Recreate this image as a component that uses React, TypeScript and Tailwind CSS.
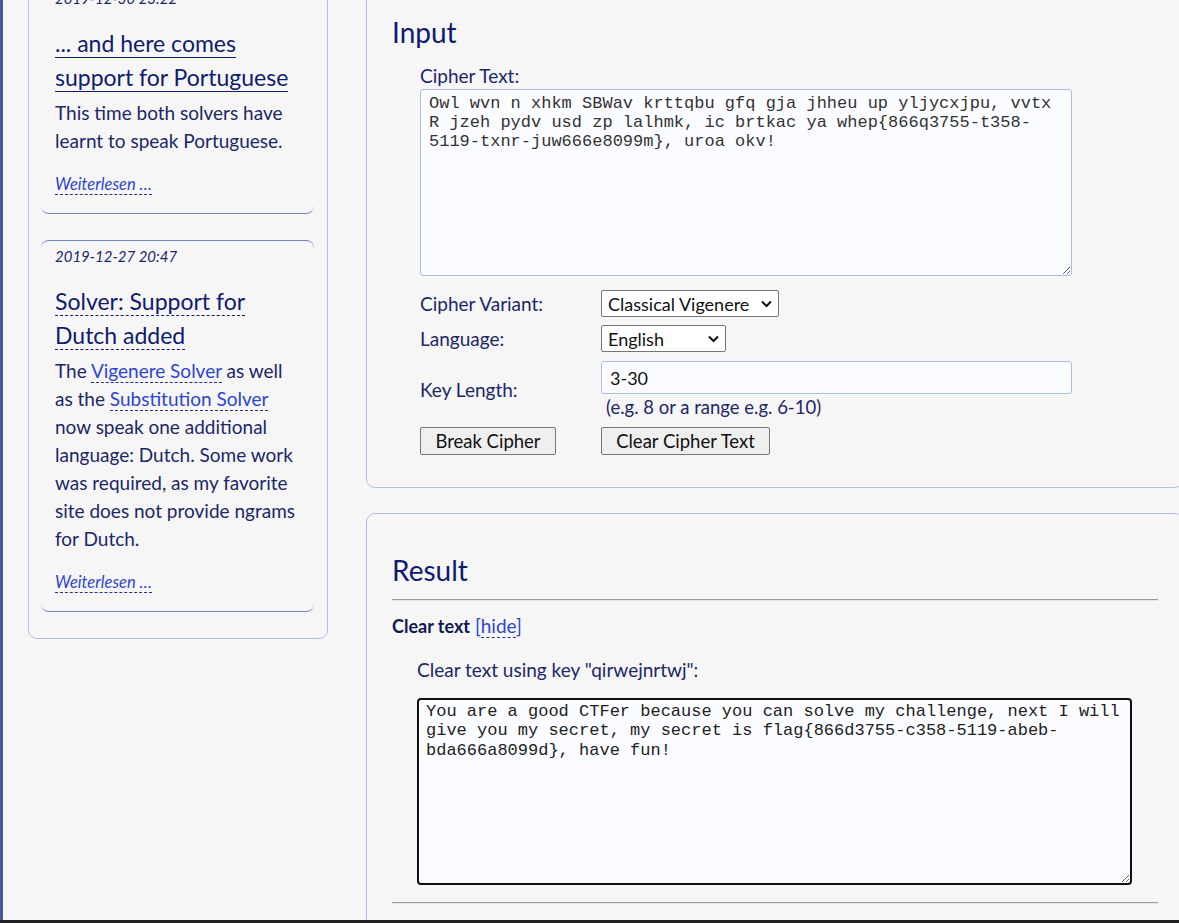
import type { ReactNode } from "react";

const CIPHER =
  "Owl wvn n xhkm SBWav krttqbu gfq gja jhheu up yljycxjpu, vvtx R jzeh pydv usd zp lalhmk, ic brtkac ya whep{866q3755-t358-5119-txnr-juw666e8099m}, uroa okv!";

const CLEAR =
  "You are a good CTFer because you can solve my challenge, next I will give you my secret, my secret is flag{866d3755-c358-5119-abeb-bda666a8099d}, have fun!";

function Link({ children }: { children: ReactNode }) {
  return (
    <a href="#" className="text-[#2e45d0] border-b border-dashed border-[#26317c]">
      {children}
    </a>
  );
}

function Article({
  date,
  title,
  solid,
  children,
}: {
  date: string;
  title: string;
  solid?: boolean;
  children: ReactNode;
}) {
  return (
    <article className="border-t border-b border-[#7482bb] rounded-[8px] px-[14px] pt-[5px] pb-[19px]">
      <div className="text-[15px] leading-[20px] italic text-[#1c2766]">{date}</div>
      <h3 className="mt-[18px] text-[23px] leading-[34px] text-[#0f1b6e]">
        <a
          href="#"
          className={
            solid
              ? "border-b border-solid border-[#0f1b6e]"
              : "border-b border-dashed border-[#0f1b6e]"
          }
        >
          {title}
        </a>
      </h3>
      <p className="mt-[5px] text-[19px] leading-[28px] text-[#1c2766]">{children}</p>
      <div className="mt-[19px] text-[16.5px] leading-[20px] italic">
        <Link>Weiterlesen …</Link>
      </div>
    </article>
  );
}

function Chevron() {
  return (
    <svg
      className="pointer-events-none absolute right-[7px] top-1/2 -translate-y-1/2"
      width="11"
      height="7"
      viewBox="0 0 11 7"
    >
      <polyline points="1,1 5.5,5.5 10,1" fill="none" stroke="#111" strokeWidth="2" />
    </svg>
  );
}

function Select({ value, width }: { value: string; width: string }) {
  return (
    <div className={`relative ${width}`}>
      <select
        defaultValue={value}
        className="appearance-none block w-full h-[27px] border border-[#767676] rounded-[2px] bg-white pl-[6px] pr-[20px] text-[18px] leading-[22px] text-[#111]"
      >
        <option>{value}</option>
      </select>
      <Chevron />
    </div>
  );
}

export default function App() {
  return (
    <div
      className="h-[923px] overflow-hidden flex flex-col bg-[#f6f6f7] text-[#1c2766]"
      style={{ fontFamily: "Lato, 'Open Sans', sans-serif" }}
    >
      <div className="flex-1 min-h-0 flex overflow-hidden">
        <div className="w-[3px] shrink-0 bg-[#4a5897]" />
        <div className="flex items-start -mt-[40px] ml-[25px] gap-[38px]">
          <aside className="w-[300px] shrink-0 border border-[#b3bfe9] rounded-b-[9px] pt-[21px] pb-[26px] pl-[12px] pr-[13px] flex flex-col gap-[26px]">
            <Article date="2019-12-30 23:22" title="... and here comes support for Portuguese" solid>
              This time both solvers have learnt to speak Portuguese.
            </Article>
            <Article date="2019-12-27 20:47" title="Solver: Support for Dutch added">
              The <Link>Vigenere Solver</Link> as well as the <Link>Substitution Solver</Link> now
              speak one additional language: Dutch. Some work was required, as my favorite site
              does not provide ngrams for Dutch.
            </Article>
          </aside>

          <main className="w-[818px] shrink-0 flex flex-col gap-[25px]">
            <section className="border border-[#b3bfe9] rounded-b-[9px] pl-[25px] pr-[25px] pt-[53px] pb-[32px]">
              <h2 className="text-[28px] leading-[36px] text-[#0f1b6e]">Input</h2>
              <div className="ml-[28px]">
                <div className="mt-[14px] text-[19px] leading-[24px]">Cipher Text:</div>
                <textarea
                  readOnly
                  defaultValue={CIPHER}
                  className="mt-[1px] block w-[652px] h-[187px] border border-[#adbbe8] rounded-[3px] bg-[#fbfcff] pl-[8px] pr-[6px] pt-[4px] text-[17px] leading-[19.2px] text-[#333]"
                  style={{ fontFamily: "'Liberation Mono', monospace" }}
                />
                <div className="mt-[14px] grid grid-cols-[181px_auto] items-center gap-y-[8px] text-[19px] leading-[24px]">
                  <div>Cipher Variant:</div>
                  <Select value="Classical Vigenere" width="w-[178px]" />
                  <div>Language:</div>
                  <Select value="English" width="w-[125px]" />
                  <div>Key Length:</div>
                  <div className="pt-[1px]">
                    <input
                      readOnly
                      defaultValue="3-30"
                      className="block w-[471px] h-[33px] border border-[#adbbe8] rounded-[3px] bg-[#fbfcff] px-[8px] text-[18px] text-[#111]"
                    />
                    <div className="mt-[1px] pl-[5px] text-[18.5px]">(e.g. 8 or a range e.g. 6-10)</div>
                  </div>
                  <div>
                    <button className="h-[28px] w-[136px] border border-[#767676] rounded-[2px] bg-[#efefef] text-[18.5px] leading-[22px] text-[#111]">
                      Break Cipher
                    </button>
                  </div>
                  <div>
                    <button className="h-[28px] w-[169px] border border-[#767676] rounded-[2px] bg-[#efefef] text-[18.5px] leading-[22px] text-[#111]">
                      Clear Cipher Text
                    </button>
                  </div>
                </div>
              </div>
            </section>

            <section className="border border-[#b3bfe9] rounded-t-[9px] pl-[25px] pr-[25px] pt-[38px] pb-[40px]">
              <h2 className="text-[28px] leading-[36px] text-[#0f1b6e]">Result</h2>
              <div className="mt-[11px] border-t border-b border-t-[#9c9c9c] border-b-[#e6e6e6]" />
              <div className="mt-[13px] text-[19px] leading-[24px]">
                <span className="font-bold text-[18px] text-[#0f1b4e]">Clear text</span>{" "}
                <span className="text-[#2e45d0]">
                  [<Link>hide</Link>]
                </span>
              </div>
              <div className="ml-[25px]">
                <div className="mt-[20px] text-[19px] leading-[24px]">
                  Clear text using key "qirwejnrtwj":
                </div>
                <textarea
                  readOnly
                  defaultValue={CLEAR}
                  className="mt-[16px] block w-[715px] h-[187px] border-2 border-[#111] rounded-[4px] bg-[#fbfcff] pl-[7px] pr-[2px] pt-[2px] text-[17px] leading-[19.3px] text-[#222]"
                  style={{ fontFamily: "'Liberation Mono', monospace" }}
                />
              </div>
              <div className="mt-[17px] border-t border-b border-t-[#9c9c9c] border-b-[#e6e6e6]" />
            </section>
          </main>
        </div>
      </div>
      <div className="h-[3px] shrink-0 bg-[#222]" />
    </div>
  );
}
